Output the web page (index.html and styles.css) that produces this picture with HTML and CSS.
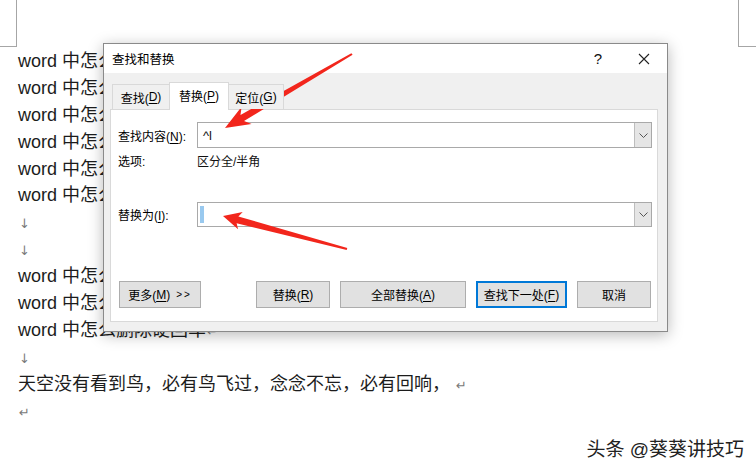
FILE: index.html
```html
<!DOCTYPE html>
<html lang="zh">
<head>
<meta charset="utf-8">
<title>查找和替换</title>
<link rel="stylesheet" href="styles.css">
</head>
<body>
<div class="page">
  <div class="marks">
    <span class="mark mark-l"></span>
    <span class="mark mark-r"></span>
  </div>
  <div class="doc">
    <p class="line">word 中怎么删除硬回车<span class="pm">↓</span></p>
    <p class="line">word 中怎么删除硬回车<span class="pm">↓</span></p>
    <p class="line">word 中怎么删除硬回车<span class="pm">↓</span></p>
    <p class="line">word 中怎么删除硬回车<span class="pm">↓</span></p>
    <p class="line">word 中怎么删除硬回车<span class="pm">↓</span></p>
    <p class="line">word 中怎么删除硬回车<span class="pm">↓</span></p>
    <p class="line"><span class="pm solo">↓</span></p>
    <p class="line"><span class="pm solo">↓</span></p>
    <p class="line">word 中怎么删除硬回车<span class="pm">↓</span></p>
    <p class="line">word 中怎么删除硬回车<span class="pm">↓</span></p>
    <p class="line">word 中怎么删除硬回车<span class="pm">↵</span></p>
    <p class="line"><span class="pm solo">↓</span></p>
    <p class="line">天空没有看到鸟，必有鸟飞过，念念不忘，必有回响，<span class="pm ret">↵</span></p>
    <p class="line"><span class="pm solo">↵</span></p>
  </div>

  <div class="dialog">
    <div class="titlebar">
      <span class="title">查找和替换</span>
      <span class="tb-btn help">?</span>
      <span class="tb-btn close">
        <svg width="12" height="12" viewBox="0 0 12 12"><path d="M1 1 L11 11 M11 1 L1 11" stroke="#222" stroke-width="1.1" fill="none"/></svg>
      </span>
    </div>
    <div class="dbody">
      <div class="tabs">
        <span class="tab t1">查找(<u>D</u>)</span>
        <span class="tab t2 active">替换(<u>P</u>)</span>
        <span class="tab t3">定位(<u>G</u>)</span>
      </div>
      <div class="panel">
        <div class="row r1">
          <span class="label">查找内容(<u>N</u>):</span>
          <div class="combo">
            <span class="value">^l</span>
            <span class="drop"><svg width="9" height="5" viewBox="0 0 9 5"><path d="M0.5 0.5 L4.5 4.5 L8.5 0.5" stroke="#555" stroke-width="1" fill="none"/></svg></span>
          </div>
        </div>
        <div class="row r2">
          <span class="label">选项:</span>
          <span class="opt">区分全/半角</span>
        </div>
        <div class="row r3">
          <span class="label">替换为(<u>I</u>):</span>
          <div class="combo c2">
            <span class="caret"></span>
            <span class="drop"><svg width="9" height="5" viewBox="0 0 9 5"><path d="M0.5 0.5 L4.5 4.5 L8.5 0.5" stroke="#555" stroke-width="1" fill="none"/></svg></span>
          </div>
        </div>
        <div class="buttons">
          <span class="btn more">更多(<u>M</u>) <span class="gg">&gt;&gt;</span></span>
          <span class="spacer"></span>
          <span class="btn b-rep">替换(<u>R</u>)</span>
          <span class="btn b-all">全部替换(<u>A</u>)</span>
          <span class="btn b-next">查找下一处(<u>F</u>)</span>
          <span class="btn b-cancel">取消</span>
        </div>
      </div>
    </div>
  </div>

  <svg class="arrows" width="756" height="472" viewBox="0 0 756 472">
    <polygon points="225,128 251.6,124 244,121 352.6,54.8 351.4,53.2 240.5,114.9 241.6,106.8" fill="#f2261c"/>
    <polygon points="223,216 242.7,211.9 238.4,216.5 347.3,248 346.7,250 236.6,223.3 238.1,229.3" fill="#f2261c"/>
  </svg>

  <div class="watermark">头条 @葵葵讲技巧</div>
</div>
</body>
</html>
```

FILE: styles.css
```css
html, body {
  margin: 0;
  padding: 0;
  background: #ffffff;
}

.page {
  position: relative;
  width: 756px;
  height: 472px;
  overflow: hidden;
  background: #ffffff;
  font-family: "Liberation Sans", "Noto Sans CJK SC", sans-serif;
}

.marks {
  display: flex;
  justify-content: space-between;
  height: 47px;
}

.mark {
  display: block;
  box-sizing: border-box;
  height: 47px;
  border-bottom: 1px solid #a6a6a6;
}

.mark-l {
  width: 17px;
  border-right: 1px solid #a6a6a6;
}

.mark-r {
  width: 18px;
  border-left: 1px solid #a6a6a6;
}

.doc {
  padding-left: 18px;
  margin-top: 1px;
  color: #1c1c1c;
  font-size: 18px;
}

.line {
  margin: 0;
  height: 26.9px;
  line-height: 26.9px;
  white-space: nowrap;
}

.pm {
  font-size: 13px;
  color: #7a7a7a;
  margin-left: 1px;
  font-family: "DejaVu Sans", sans-serif;
}

.pm.solo {
  margin-left: 1px;
}

.pm.ret {
  margin-left: 6px;
}

/* Dialog */
.dialog {
  position: absolute;
  left: 103px;
  top: 43px;
  width: 565px;
  height: 289px;
  box-sizing: border-box;
  border: 1px solid #8a8a8a;
  background: #f0f0f0;
  box-shadow: 0 3px 14px rgba(0, 0, 0, 0.28);
  font-family: "Liberation Sans", "Noto Sans CJK SC", sans-serif;
  font-size: 12px;
  color: #000;
  display: flex;
  flex-direction: column;
}

.titlebar {
  height: 29px;
  background: #ffffff;
  display: flex;
  align-items: center;
}

.title {
  flex: 1;
  padding-left: 8px;
  font-size: 12.5px;
}

.tb-btn {
  width: 46px;
  height: 29px;
  display: flex;
  align-items: center;
  justify-content: center;
}

.help {
  font-size: 15px;
  color: #111;
  font-family: "Liberation Sans", sans-serif;
}

.dbody {
  flex: 1;
  padding: 9px 9px 0 6px;
  display: flex;
  flex-direction: column;
}

.tabs {
  display: flex;
  align-items: flex-end;
  height: 27px;
  padding-left: 2px;
  position: relative;
  z-index: 2;
}

.tab {
  box-sizing: border-box;
  height: 25px;
  display: flex;
  align-items: center;
  justify-content: center;
  border: 1px solid #d9d9d9;
  border-bottom: none;
  background: #f0f0f0;
  font-size: 12px;
}

.tab.t1 {
  width: 57px;
  border-right: none;
}

.tab.t2 {
  width: 60px;
}

.tab.t3 {
  width: 55px;
  border-left: none;
}

.tab.active {
  height: 28px;
  margin-bottom: -1px;
  background: #ffffff;
  padding-bottom: 2px;
}

.panel {
  box-sizing: border-box;
  height: 213px;
  border: 1px solid #d9d9d9;
  background: #ffffff;
  padding: 12px 5px 0 7px;
  display: flex;
  flex-direction: column;
}

.row {
  display: flex;
  align-items: center;
}

.label {
  width: 79px;
  flex-shrink: 0;
}

.r1 {
  height: 26px;
}

.r2 {
  height: 20px;
  margin-top: 2px;
}

.r3 {
  height: 25px;
  margin-top: 32px;
}

.combo {
  flex: 1;
  height: 100%;
  box-sizing: border-box;
  border: 1px solid #a9a9a9;
  display: flex;
  align-items: center;
  background: #fff;
}

.value {
  flex: 1;
  padding-left: 5px;
  font-size: 13px;
  color: #111;
}

.caret {
  width: 4px;
  height: 17px;
  margin-left: 2px;
  background: #99c9ef;
}

.c2 .drop {
  margin-left: auto;
}

.drop {
  width: 17px;
  height: 100%;
  box-sizing: border-box;
  border-left: 1px solid #bdbdbd;
  background: #e5e5e5;
  display: flex;
  align-items: center;
  justify-content: center;
}

.opt {
  color: #111;
}

.buttons {
  display: flex;
  margin-top: 54px;
  height: 27px;
  padding: 0 1px;
  gap: 10px;
}

.spacer {
  flex: 1;
}

.btn {
  box-sizing: border-box;
  height: 27px;
  display: flex;
  align-items: center;
  justify-content: center;
  border: 1px solid #adadad;
  background: #e1e1e1;
  font-size: 12px;
  white-space: nowrap;
}

.more {
  width: 82px;
}

.gg {
  font-size: 10px;
  margin-left: 6px;
  letter-spacing: 2px;
}

.b-rep {
  width: 74px;
}

.b-all {
  width: 126px;
}

.b-next {
  width: 91px;
  border: 2px solid #0078d7;
}

.b-cancel {
  width: 74px;
}

u {
  text-decoration: underline;
  text-underline-offset: 2px;
}

.arrows {
  position: absolute;
  left: 0;
  top: 0;
  pointer-events: none;
}

.watermark {
  position: absolute;
  right: 12px;
  top: 437px;
  font-size: 19px;
  line-height: 26px;
  color: #222;
  font-family: "Liberation Sans", "Noto Sans CJK SC", sans-serif;
  text-shadow: 1px 1px 0 #fff, -1px -1px 0 #fff, 1px -1px 0 #fff, -1px 1px 0 #fff;
}
```
